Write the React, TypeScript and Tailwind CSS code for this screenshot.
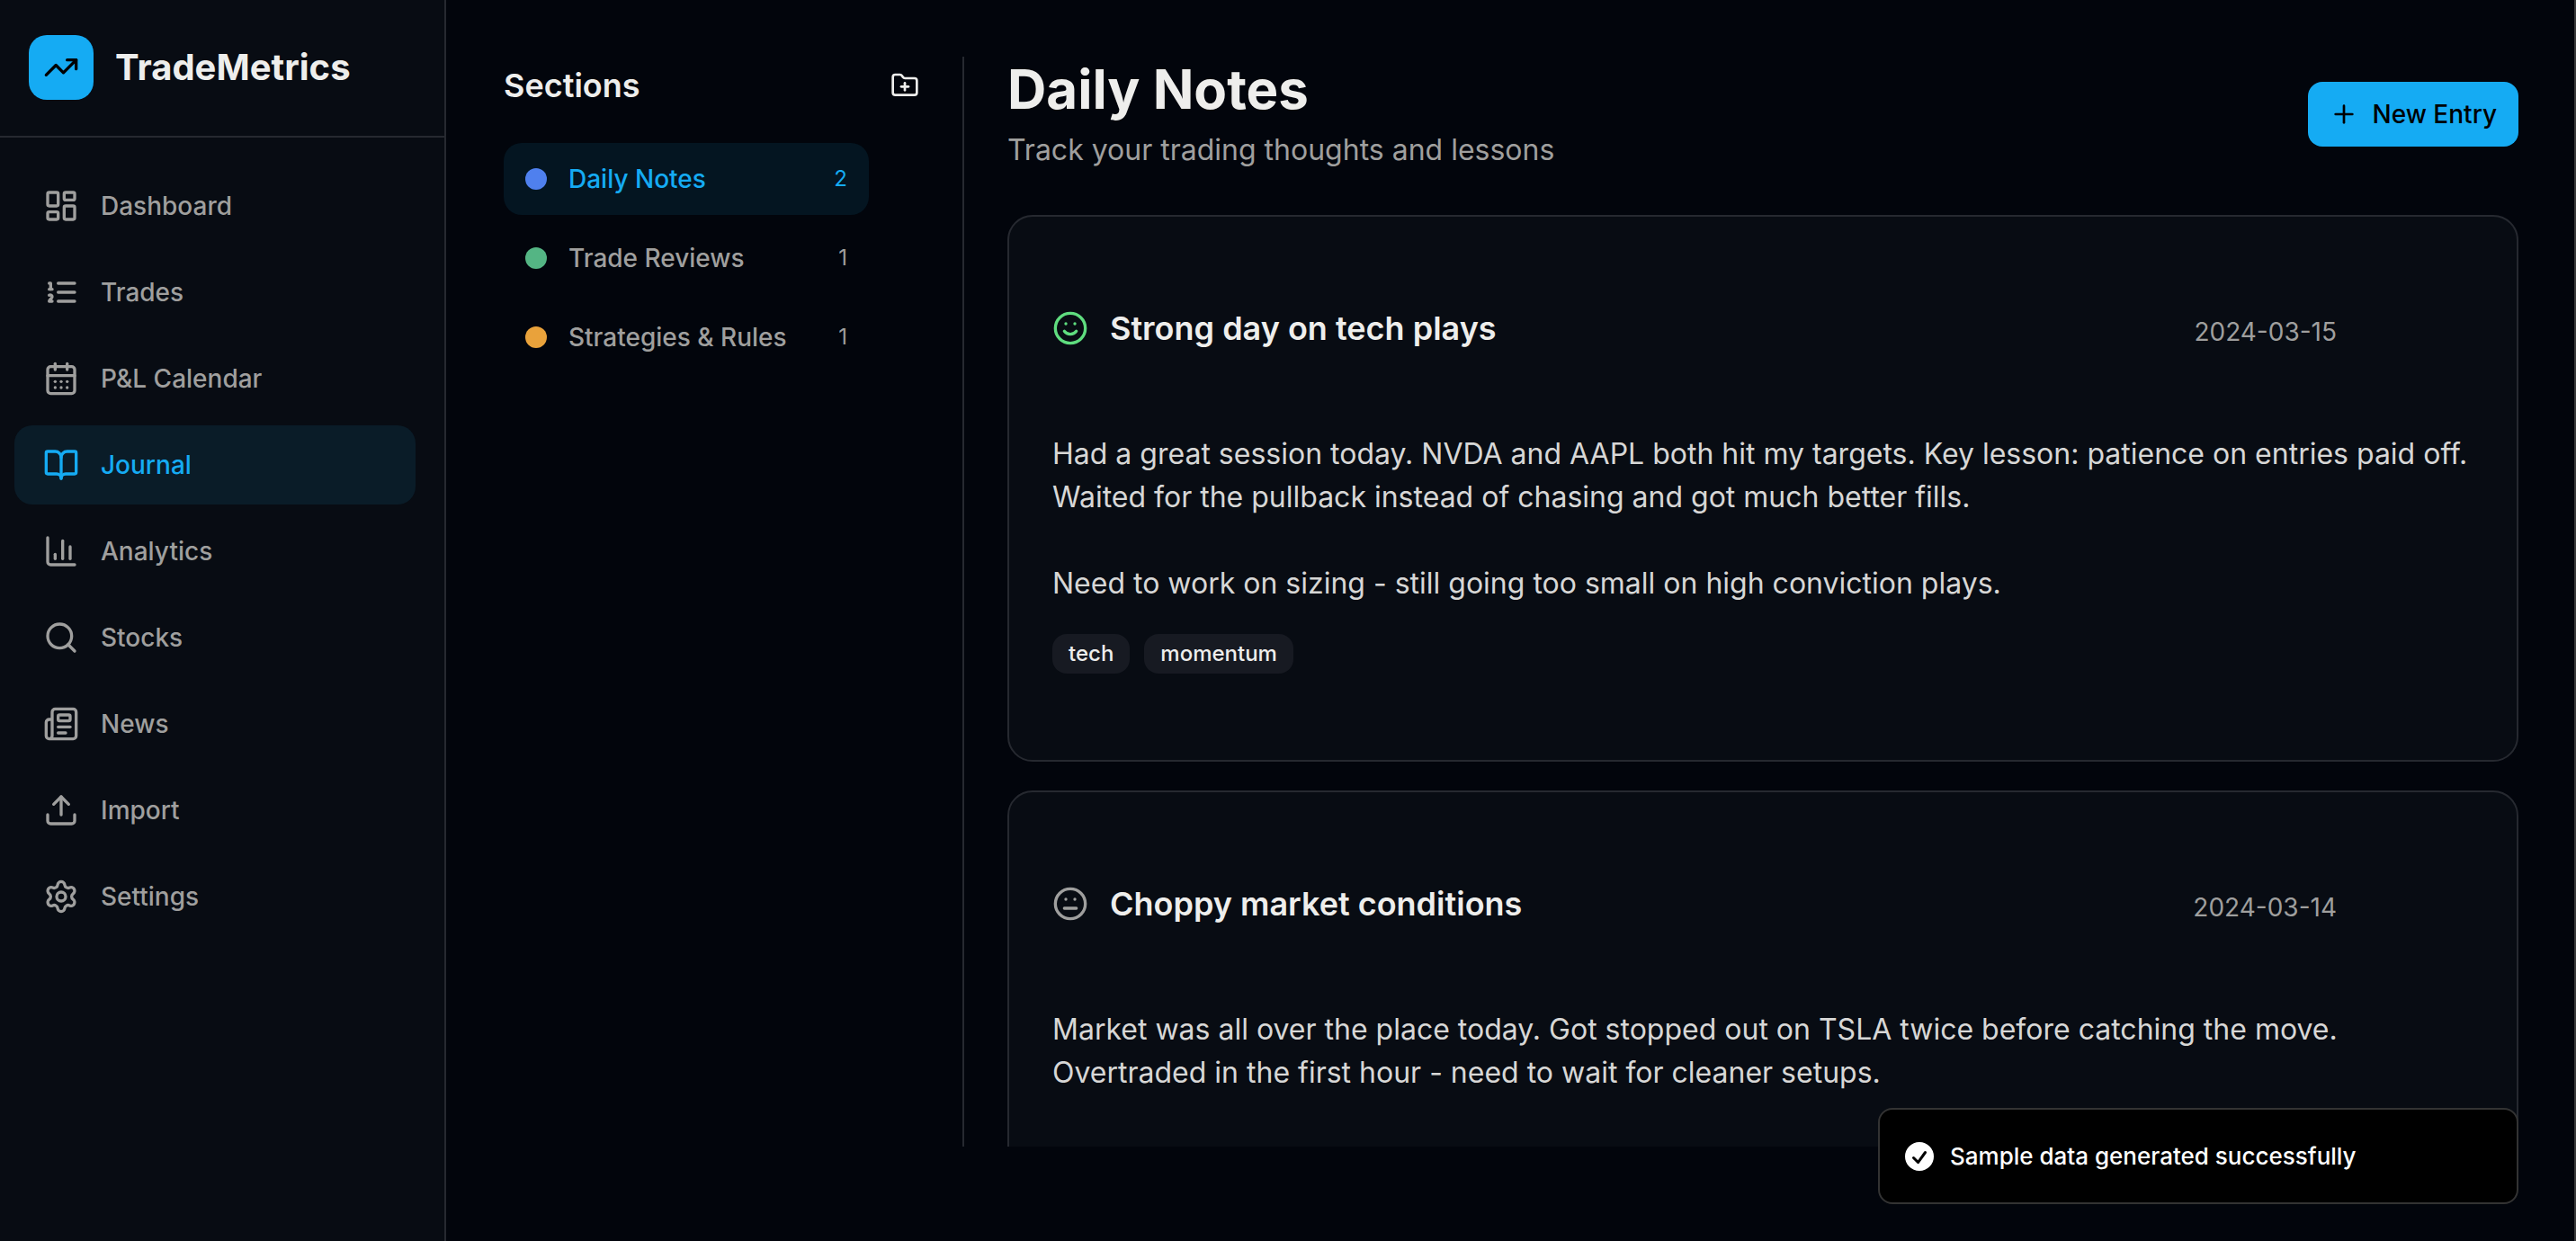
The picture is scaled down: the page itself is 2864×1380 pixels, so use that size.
import {
  BookOpen,
  CalendarDays,
  ChartColumn,
  FolderPlus,
  LayoutDashboard,
  Meh,
  Newspaper,
  Plus,
  Search,
  Settings,
  Smile,
  TrendingUp,
  Upload,
} from "lucide-react";

const NumberedList = ({ className }: { className?: string }) => (
  <svg
    viewBox="0 0 24 24"
    fill="none"
    stroke="currentColor"
    strokeWidth="2"
    strokeLinecap="round"
    strokeLinejoin="round"
    className={className}
    aria-hidden="true"
  >
    <path d="M10 6h11" />
    <path d="M10 12h11" />
    <path d="M10 18h11" />
    <path d="M4 6h1v4" />
    <path d="M4 10h2" />
    <path d="M6 18H4c0-1 2-2 2-3s-1-1.5-2-1" />
  </svg>
);

const navItems = [
  { label: "Dashboard", icon: LayoutDashboard },
  { label: "Trades", icon: NumberedList },
  { label: "P&L Calendar", icon: CalendarDays },
  { label: "Journal", icon: BookOpen, active: true },
  { label: "Analytics", icon: ChartColumn },
  { label: "Stocks", icon: Search },
  { label: "News", icon: Newspaper },
  { label: "Import", icon: Upload },
  { label: "Settings", icon: Settings },
];

const sections = [
  { id: 1, name: "Daily Notes", count: 2, dot: "bg-[#4f80ee]", active: true },
  { id: 2, name: "Trade Reviews", count: 1, dot: "bg-[#54b584]" },
  { id: 3, name: "Strategies & Rules", count: 1, dot: "bg-[#e9a23b]" },
];

const entries = [
  {
    id: 1,
    title: "Strong day on tech plays",
    date: "2024-03-15",
    mood: "good",
    content:
      "Had a great session today. NVDA and AAPL both hit my targets. Key lesson: patience on entries paid off. Waited for the pullback instead of chasing and got much better fills.\n\nNeed to work on sizing - still going too small on high conviction plays.",
    tags: ["tech", "momentum"],
  },
  {
    id: 2,
    title: "Choppy market conditions",
    date: "2024-03-14",
    mood: "neutral",
    content:
      "Market was all over the place today. Got stopped out on TSLA twice before catching the move.\nOvertraded in the first hour - need to wait for cleaner setups.",
    tags: [],
  },
];

const Sidebar = () => {
  return (
    <aside className="w-[496px] shrink-0 border-r-2 border-[#262930] bg-[#080c13]">
      <div className="flex h-[153px] items-start gap-6 border-b-2 border-[#262930] px-8 pt-[39px]">
        <div className="flex size-[72px] items-center justify-center rounded-[20px] bg-[#15abf3] text-black">
          <TrendingUp className="size-10" />
        </div>
        <span className="text-[40px] leading-[72px] font-bold">TradeMetrics</span>
      </div>
      <nav className="flex flex-col gap-2 py-8 pr-8 pl-4">
        {navItems.map(({ label, icon: Icon, active }) => (
          <a
            key={label}
            href="#"
            className={`flex h-[88px] items-center gap-6 rounded-[20px] px-8 text-[28px] font-medium ${
              active ? "bg-[#0a1c28] text-[#15abf3]" : "text-[#9f9f9e]"
            }`}
          >
            <Icon className="size-10" />
            {label}
          </a>
        ))}
      </nav>
    </aside>
  );
};

const SectionList = () => {
  return (
    <div className="w-[512px] shrink-0 border-r-2 border-[#262930] pr-8">
      <div className="mb-8 flex h-16 items-center justify-between">
        <h2 className="text-[36px] font-semibold">Sections</h2>
        <button aria-label="Add section" className="flex size-16 items-center justify-center">
          <FolderPlus className="size-8" />
        </button>
      </div>
      <div className="flex flex-col gap-2 pr-[72px]">
        {sections.map((section) => (
          <button
            key={section.id}
            className={`flex h-20 items-center gap-6 rounded-[20px] px-6 text-left ${
              section.active ? "bg-[#041521] text-[#15abf3]" : "text-[#9f9f9e]"
            }`}
          >
            <span className={`size-6 rounded-full ${section.dot}`} />
            <span className="flex-1 text-[28px] font-medium">{section.name}</span>
            <span className="text-[24px]">{section.count}</span>
          </button>
        ))}
      </div>
    </div>
  );
};

const EntryCard = ({ entry }: { entry: (typeof entries)[number] }) => {
  return (
    <article className="shrink-0 rounded-[28px] border-2 border-[#262930] bg-[#080c13] px-12 py-24">
      <div className="flex h-16 items-start justify-between">
        <div className="flex h-14 items-center gap-6">
          {entry.mood === "good" ? (
            <Smile className="size-10 text-[#5fdd7f]" />
          ) : (
            <Meh className="size-10 text-[#9f9f9e]" />
          )}
          <h3 className="text-[36px] font-semibold">{entry.title}</h3>
        </div>
        <time className="mr-[152px] text-[28px] leading-[64px] text-[#9f9f9e]">{entry.date}</time>
      </div>
      <p className="mt-20 text-[32px] leading-[48px] whitespace-pre-wrap text-[#d7d7d6]">
        {entry.content}
      </p>
      {entry.tags.length > 0 && (
        <div className="mt-8 flex gap-4">
          {entry.tags.map((tag) => (
            <span
              key={tag}
              className="rounded-2xl bg-[#171a22] px-[18px] py-[6px] text-[24px] leading-8 font-medium"
            >
              {tag}
            </span>
          ))}
        </div>
      )}
    </article>
  );
};

const Toast = () => {
  return (
    <div
      role="status"
      className="fixed right-16 bottom-[41px] flex h-[107px] w-[712px] items-center gap-[14px] rounded-2xl border-2 border-[#333333] bg-black px-6 text-white"
    >
      <svg viewBox="0 0 20 20" fill="currentColor" className="size-10">
        <path
          fillRule="evenodd"
          clipRule="evenodd"
          d="M10 18a8 8 0 100-16 8 8 0 000 16zm3.857-9.809a.75.75 0 00-1.214-.882l-3.483 4.79-1.88-1.88a.75.75 0 10-1.06 1.061l2.5 2.5a.75.75 0 001.137-.089l4-5.5z"
        />
      </svg>
      <span className="text-[26px] font-medium">Sample data generated successfully</span>
    </div>
  );
};

const App = () => {
  return (
    <div className="flex h-screen overflow-hidden bg-[#02050c] font-['Inter',sans-serif] text-[#eeeeec]">
      <Sidebar />
      <main className="flex min-w-0 flex-1 border-r-2 border-[#3a3a3b] pt-[63px] pr-[62px] pb-[105px] pl-16">
        <SectionList />
        <div className="flex min-w-0 flex-1 flex-col pl-12">
          <header className="mb-12 flex items-center justify-between">
            <div>
              <h1 className="text-[60px] leading-[72px] font-bold">Daily Notes</h1>
              <p className="mt-2 text-[32px] leading-[48px] text-[#9f9f9e]">
                Track your trading thoughts and lessons
              </p>
            </div>
            <button className="flex h-[72px] items-center gap-4 rounded-2xl bg-[#15abf3] px-6 text-[28px] font-medium text-black">
              <Plus className="size-8" />
              New Entry
            </button>
          </header>
          <div className="flex min-h-0 flex-1 flex-col gap-8 overflow-hidden">
            {entries.map((entry) => (
              <EntryCard key={entry.id} entry={entry} />
            ))}
          </div>
        </div>
      </main>
      <Toast />
    </div>
  );
};

export default App;
